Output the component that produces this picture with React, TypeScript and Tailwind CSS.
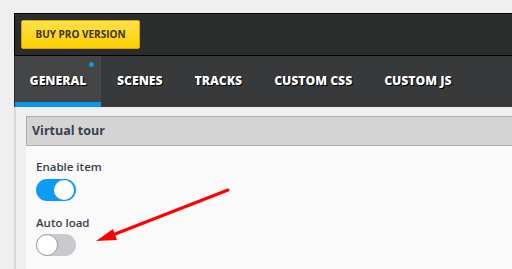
import React from "react";

const tabs = [
  { label: "GENERAL", active: true },
  { label: "SCENES" },
  { label: "TRACKS" },
  { label: "CUSTOM CSS" },
  { label: "CUSTOM JS" },
];

function Toggle(props: { on: boolean }) {
  return props.on ? (
    <div className="flex h-[22px] w-[40px] items-center justify-end rounded-full bg-[#0d9bf5] p-[2px]">
      <div className="h-[20px] w-[20px] rounded-full bg-white" />
    </div>
  ) : (
    <div className="flex h-[22px] w-[40px] items-center justify-start rounded-full bg-[#c7c9cc]">
      <div className="h-[22px] w-[22px] rounded-full border border-[#9aa0a6] bg-white" />
    </div>
  );
}

export default function App() {
  return (
    <div
      className="relative h-[269px] w-[512px] overflow-hidden bg-[#efefef] pt-[13px] pl-[14px]"
      style={{ fontFamily: '"Open Sans", "Segoe UI", sans-serif' }}
    >
      <div className="flex h-[43px] items-center border-y border-l border-black bg-[#2b2c2c] pl-[6px]">
        <button className="flex h-[29px] w-[119px] items-center justify-center rounded-[2px] border border-[#d4a600] bg-[linear-gradient(180deg,#ffe14a_0%,#fcd000_100%)] text-[10px] font-bold text-[#3b3521]">
          BUY PRO VERSION
        </button>
      </div>
      <div className="flex h-[51px] border-l border-[#2a2a2a] bg-[#38393b]">
        {tabs.map((tab) => (
          <div
            key={tab.label}
            className={
              tab.active
                ? "relative flex w-[86px] items-center justify-center border-b-[5px] border-[#0a96ea] bg-[#444547] pt-[5px] text-[12.2px] font-extrabold text-white"
                : "flex items-center px-[16px] text-[12.2px] font-extrabold text-white"
            }
            style={{ textShadow: "1px 1px 0 #000, -0.5px 0 0 #000" }}
          >
            {tab.label}
            {tab.active ? (
              <span className="absolute top-[6px] right-[7px] h-[5px] w-[5px] rounded-full bg-[#0a96ea]" />
            ) : null}
          </div>
        ))}
      </div>
      <div className="h-full border-l-2 border-[#d9d9d9] bg-[#f0f0f0] pt-[9px] pl-[10px]">
        <div className="flex h-[30px] items-center border-y border-l border-[#aeaeae] bg-[#d4d4d4] pl-[5px] text-[12.5px] font-bold text-[#3a3f4e]">
          Virtual tour
        </div>
        <div className="h-full bg-[#fafafa] pt-[13px] pl-[10px]">
          <p className="text-[11.5px] leading-[16px] font-semibold text-[#3a3f4e]">Enable item</p>
          <div className="mt-[4px]">
            <Toggle on />
          </div>
          <p className="mt-[14px] text-[11.5px] leading-[16px] font-semibold text-[#3a3f4e]">Auto load</p>
          <div className="mt-[3px]">
            <Toggle on={false} />
          </div>
        </div>
      </div>
      <svg className="absolute top-0 left-0" width="512" height="269" viewBox="0 0 512 269">
        <line x1="228" y1="190" x2="110" y2="236" stroke="#ff0000" strokeWidth="3" strokeLinecap="round" />
        <polygon points="96,241 113,229 117,240" fill="#ff0000" />
      </svg>
    </div>
  );
}
